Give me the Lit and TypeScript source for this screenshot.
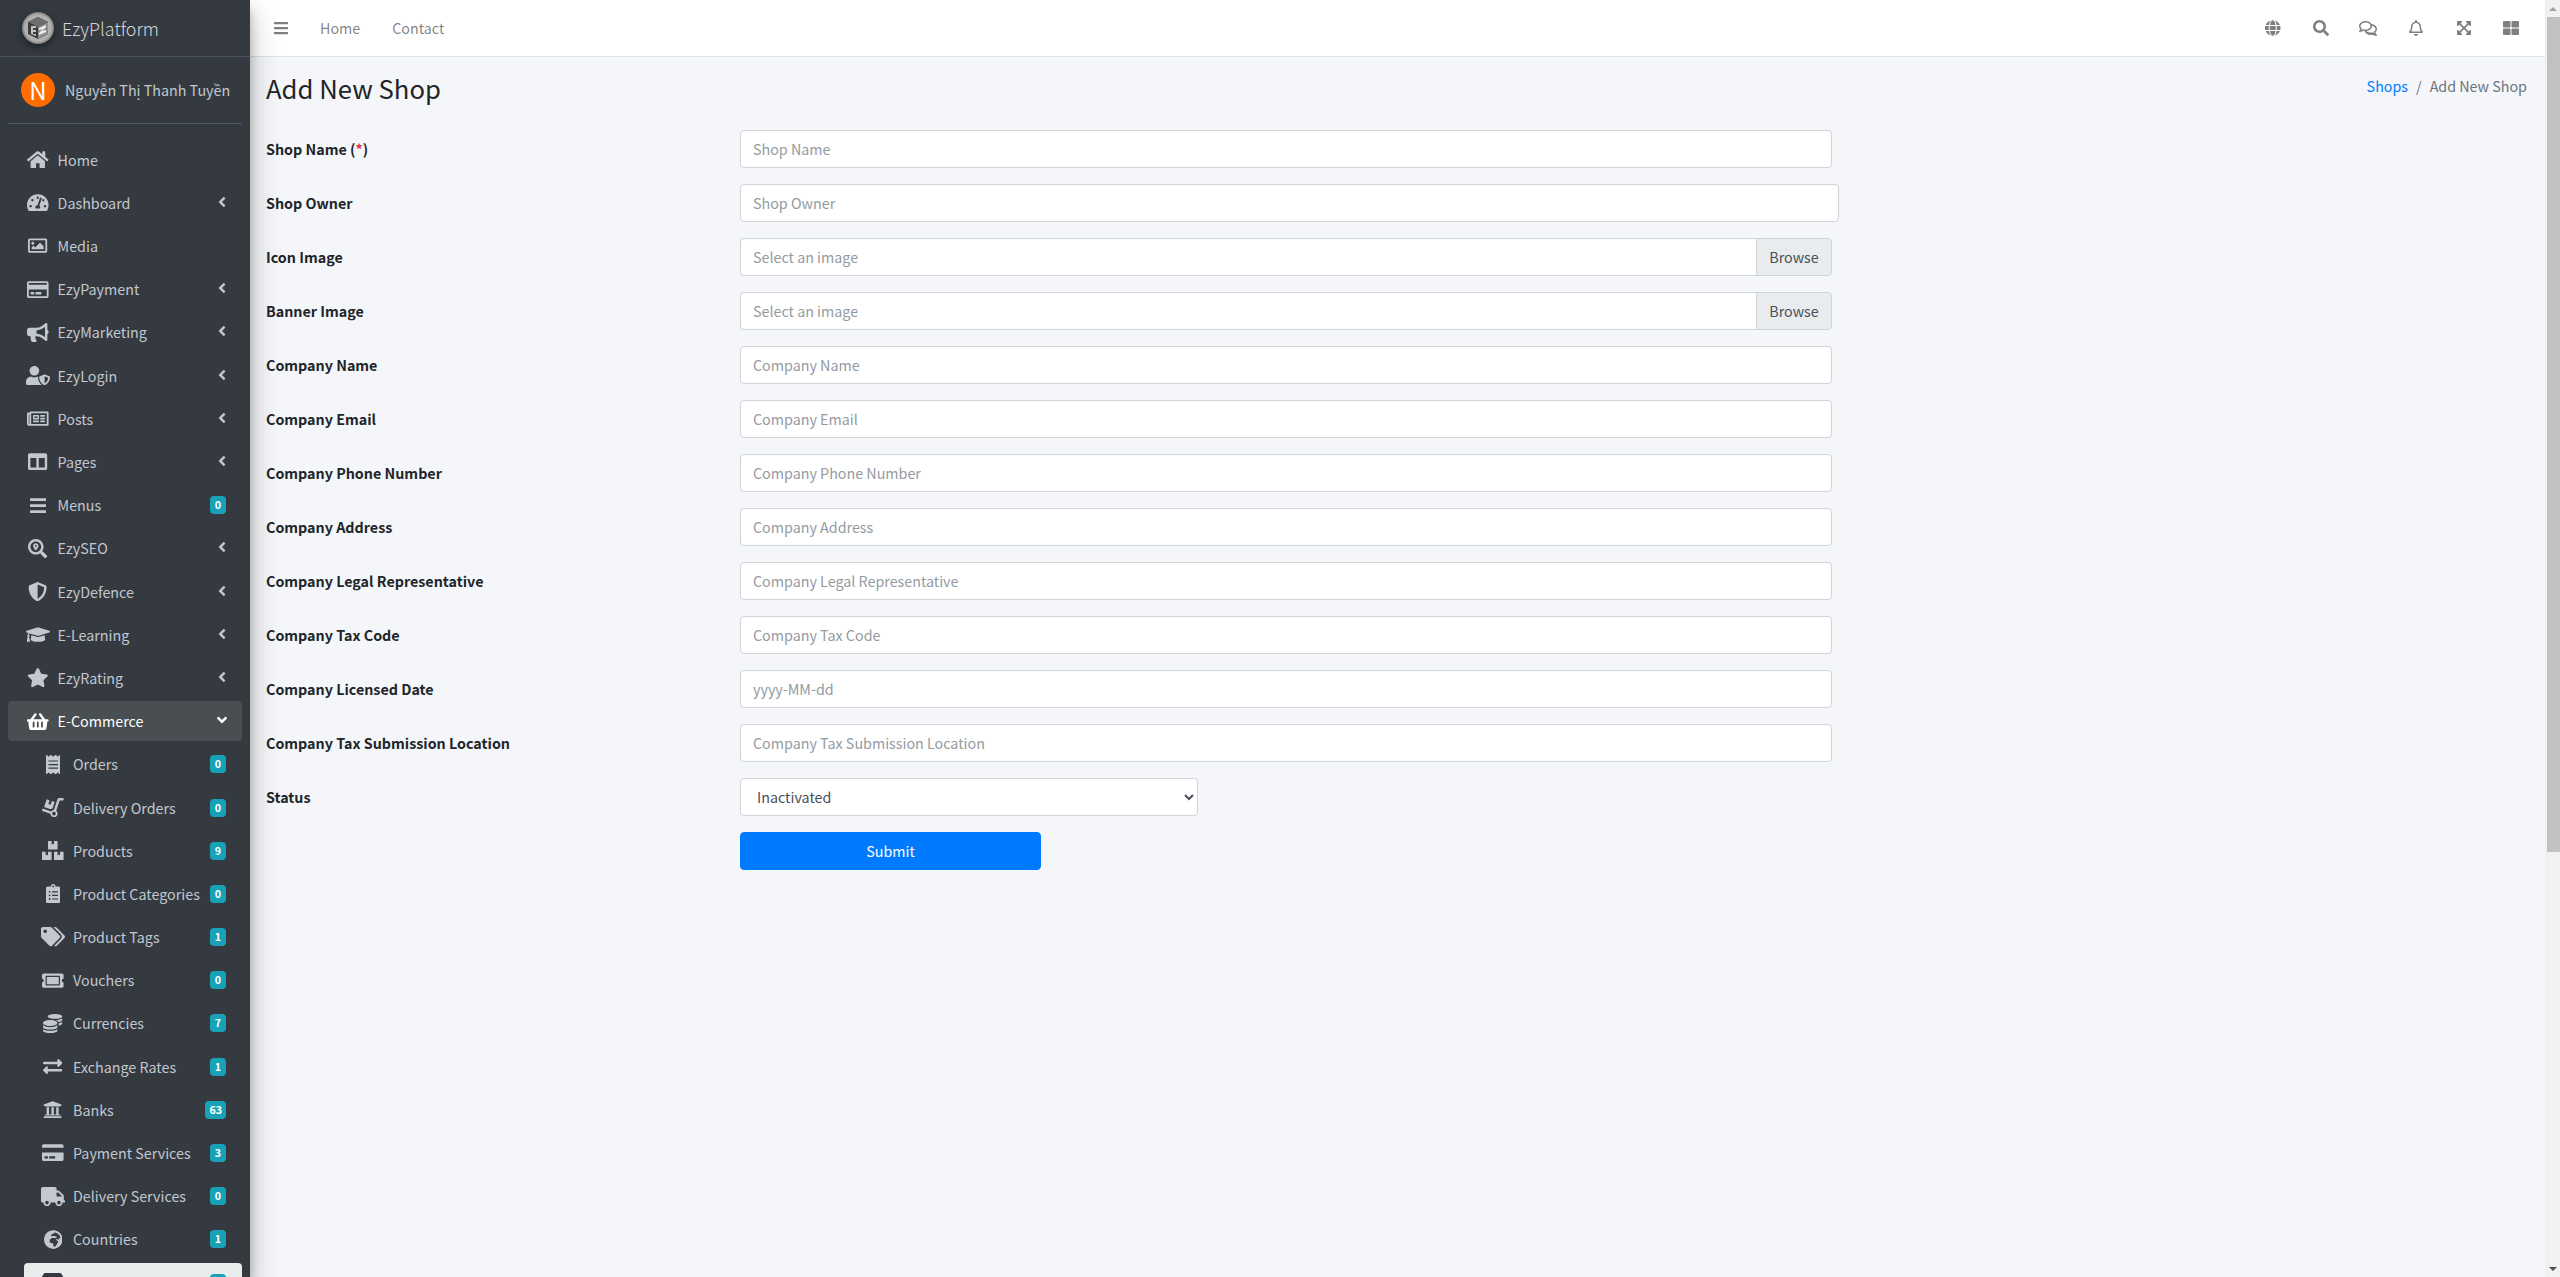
import { LitElement, html, css, svg } from "lit";
import { customElement } from "lit/decorators.js";

type Ic = { w: number; d: string; flip?: boolean };
const I: Record<string, Ic> = {
  bars: { w: 448, d: "M16 132h416c8.837 0 16-7.163 16-16V76c0-8.837-7.163-16-16-16H16C7.163 60 0 67.163 0 76v40c0 8.837 7.163 16 16 16zm0 160h416c8.837 0 16-7.163 16-16v-40c0-8.837-7.163-16-16-16H16c-8.837 0-16 7.163-16 16v40c0 8.837 7.163 16 16 16zm0 160h416c8.837 0 16-7.163 16-16v-40c0-8.837-7.163-16-16-16H16c-8.837 0-16 7.163-16 16v40c0 8.837 7.163 16 16 16z" },
  search: { w: 512, d: "M505 442.7L405.3 343c-4.5-4.5-10.6-7-17-7H372c27.6-35.3 44-79.7 44-128C416 93.1 322.9 0 208 0S0 93.1 0 208s93.1 208 208 208c48.3 0 92.7-16.4 128-44v16.3c0 6.4 2.5 12.5 7 17l99.7 99.7c9.4 9.4 24.6 9.4 33.9 0l28.3-28.3c9.4-9.4 9.4-24.6.1-34zM208 336c-70.7 0-128-57.2-128-128 0-70.7 57.2-128 128-128 70.7 0 128 57.2 128 128 0 70.7-57.2 128-128 128z" },
  star: { w: 576, d: "M259.3 17.8L194 150.2 47.9 171.5c-26.2 3.8-36.7 36.1-17.7 54.6l105.7 103-25 145.5c-4.5 26.3 23.2 46 46.4 33.7L288 439.6l130.7 68.7c23.2 12.2 50.9-7.4 46.4-33.7l-25-145.5 105.7-103c19-18.5 8.5-50.8-17.7-54.6L382 150.2 316.7 17.8c-11.7-23.6-45.6-23.9-57.4 0z" },
  left: { w: 256, d: "M31.7 239l136-136c9.4-9.4 24.6-9.4 33.9 0l22.6 22.6c9.4 9.4 9.4 24.6 0 33.9L127.9 256l96.4 96.4c9.4 9.4 9.4 24.6 0 33.9L201.7 409c-9.4 9.4-24.6 9.4-33.9 0l-136-136c-9.5-9.4-9.5-24.6-.1-34z" },
  down: { w: 320, d: "M143 352.3L7 216.3c-9.4-9.4-9.4-24.6 0-33.9l22.6-22.6c9.4-9.4 24.6-9.4 33.9 0l96.4 96.4 96.4-96.4c9.4-9.4 24.6-9.4 33.9 0l22.6 22.6c9.4 9.4 9.4 24.6 0 33.9l-136 136c-9.2 9.4-24.4 9.4-33.8 0z" },
  home: { w: 576, d: "M280.37 148.26L96 300.11V464a16 16 0 0 0 16 16l112.06-.29a16 16 0 0 0 15.92-16V368a16 16 0 0 1 16-16h64a16 16 0 0 1 16 16v95.64a16 16 0 0 0 16 16.05L464 480a16 16 0 0 0 16-16V300L295.67 148.26a12.19 12.19 0 0 0-15.3 0zM571.6 251.47L488 182.56V44.05a12 12 0 0 0-12-12h-56a12 12 0 0 0-12 12v72.61L318.47 43a48 48 0 0 0-61 0L4.34 251.47a12 12 0 0 0-1.6 16.9l25.5 31A12 12 0 0 0 45.15 301l235.22-193.74a12.19 12.19 0 0 1 15.3 0L530.9 301a12 12 0 0 0 16.9-1.6l25.5-31a12 12 0 0 0-1.7-16.93z" },
  gauge: { w: 576, d: "M288 32C128.94 32 0 160.94 0 320c0 52.8 14.25 102.26 39.06 144.8 5.61 9.62 16.3 15.2 27.44 15.2h443c11.14 0 21.83-5.58 27.44-15.2C561.75 422.26 576 372.8 576 320c0-159.06-128.94-288-288-288zm0 64c14.71 0 26.58 10.13 30.32 23.65-1.11 2.26-2.64 4.23-3.45 6.67l-9.22 27.67c-5.13 3.49-10.97 6.01-17.64 6.01-17.67 0-32-14.33-32-32S270.33 96 288 96zM96 384c-17.67 0-32-14.33-32-32s14.33-32 32-32 32 14.33 32 32-14.33 32-32 32zm48-160c-17.67 0-32-14.33-32-32s14.33-32 32-32 32 14.33 32 32-14.33 32-32 32zm246.77-72.41l-61.33 184C343.13 347.33 352 364.54 352 384c0 11.72-3.38 22.55-8.88 32H232.88c-5.5-9.45-8.88-20.28-8.88-32 0-33.94 26.5-61.43 59.9-63.59l61.34-184.01c4.17-12.56 17.73-19.45 30.36-15.17 12.57 4.19 19.35 17.79 15.17 30.36zm14.66 57.2l15.52-46.55c3.47-1.29 7.13-2.23 11.05-2.23 17.67 0 32 14.33 32 32s-14.33 32-32 32c-11.38-.01-20.89-6.28-26.57-15.22zM480 384c-17.67 0-32-14.33-32-32s14.33-32 32-32 32 14.33 32 32-14.33 32-32 32z" },
  image: { w: 512, d: "M464 64H48C21.49 64 0 85.49 0 112v288c0 26.51 21.49 48 48 48h416c26.51 0 48-21.49 48-48V112c0-26.51-21.49-48-48-48zm-6 336H54a6 6 0 0 1-6-6V118a6 6 0 0 1 6-6h404a6 6 0 0 1 6 6v276a6 6 0 0 1-6 6zM128 152c-22.091 0-40 17.909-40 40s17.909 40 40 40 40-17.909 40-40-17.909-40-40-40zM96 352h320v-80l-87.515-87.515c-4.686-4.686-12.284-4.686-16.971 0L192 304l-39.515-39.515c-4.686-4.686-12.284-4.686-16.971 0L96 304v48z" },
  cardo: { w: 576, d: "M527.9 32H48.1C21.5 32 0 53.5 0 80v352c0 26.5 21.5 48 48.1 48h479.8c26.6 0 48.1-21.5 48.1-48V80c0-26.5-21.5-48-48.1-48zM54.1 80h467.8c3.3 0 6 2.7 6 6v42H48.1V86c0-3.3 2.7-6 6-6zm467.8 352H54.1c-3.3 0-6-2.7-6-6V256h479.8v170c0 3.3-2.7 6-6 6zM192 332v40c0 6.6-5.4 12-12 12h-72c-6.6 0-12-5.4-12-12v-40c0-6.6 5.4-12 12-12h72c6.6 0 12 5.4 12 12zm192 0v40c0 6.6-5.4 12-12 12H236c-6.6 0-12-5.4-12-12v-40c0-6.6 5.4-12 12-12h136c6.6 0 12 5.4 12 12z" },
  card: { w: 576, d: "M0 432c0 26.5 21.5 48 48 48h480c26.5 0 48-21.5 48-48V256H0v176zm192-68c0-6.6 5.4-12 12-12h136c6.6 0 12 5.4 12 12v40c0 6.6-5.4 12-12 12H204c-6.6 0-12-5.4-12-12v-40zm-128 0c0-6.6 5.4-12 12-12h72c6.6 0 12 5.4 12 12v40c0 6.6-5.4 12-12 12H76c-6.6 0-12-5.4-12-12v-40zM576 80v48H0V80c0-26.5 21.5-48 48-48h480c26.5 0 48 21.5 48 48z" },
  bullhorn: { w: 576, d: "M576 240c0-23.63-12.95-44.04-32-55.12V32.01C544 23.26 537.02 0 512 0c-7.12 0-14.19 2.38-19.98 7.02l-85.03 68.03C364.28 109.19 310.66 128 256 128H64c-35.35 0-64 28.65-64 64v96c0 35.35 28.65 64 64 64h33.7c-1.39 10.48-2.18 21.14-2.18 32 0 39.77 9.26 77.35 25.56 110.94 5.19 10.69 16.52 17.06 28.4 17.06h74.28c26.05 0 41.69-29.84 25.9-50.56-16.4-21.52-26.15-48.36-26.15-77.44 0-11.11 1.62-21.79 4.41-32H256c54.66 0 108.28 18.81 150.98 52.95l85.03 68.03a32.023 32.023 0 0 0 19.98 7.02c24.92 0 32-22.78 32-32V295.13C563.05 284.04 576 263.63 576 240zm-96 141.42l-33.05-26.44C392.95 311.78 325.12 288 256 288v-96c69.12 0 136.95-23.78 190.95-66.98L480 98.58v282.84z" },
  usershield: { w: 640, d: "M622.3 271.1l-115.2-45c-4.1-1.6-12.6-3.7-22.2 0l-115.2 45c-10.7 4.2-17.7 14-17.7 24.9 0 111.6 68.7 188.8 132.9 213.9 9.6 3.7 18 1.6 22.2 0C558.4 489.9 640 420.5 640 296c0-10.9-7-20.7-17.7-24.9zM496 462.4V273.3l95.5 37.3c-5.6 87.1-60.9 135.4-95.5 151.8zM224 256c70.7 0 128-57.3 128-128S294.7 0 224 0 96 57.3 96 128s57.3 128 128 128zm96 40c0-2.5.8-4.8 1.1-7.2-2.5-.1-4.9-.8-7.5-.8h-16.7c-22.2 10.2-46.9 16-72.9 16s-50.6-5.8-72.9-16h-16.7C60.2 288 0 348.2 0 422.4V464c0 26.5 21.5 48 48 48h352c6.8 0 13.3-1.5 19.2-4-54-42.9-99.2-116.7-99.2-212z" },
  news: { w: 576, d: "M552 64H112c-20.858 0-38.643 13.377-45.248 32H24c-13.255 0-24 10.745-24 24v272c0 30.928 25.072 56 56 56h496c13.255 0 24-10.745 24-24V88c0-13.255-10.745-24-24-24zM48 392V144h16v248c0 4.411-3.589 8-8 8s-8-3.589-8-8zm480 8H111.422c.374-2.614.578-5.283.578-8V112h416v288zM172 280h136c6.627 0 12-5.373 12-12v-96c0-6.627-5.373-12-12-12H172c-6.627 0-12 5.373-12 12v96c0 6.627 5.373 12 12 12zm28-80h80v40h-80v-40zm-40 140v-24c0-6.627 5.373-12 12-12h136c6.627 0 12 5.373 12 12v24c0 6.627-5.373 12-12 12H172c-6.627 0-12-5.373-12-12zm192 0v-24c0-6.627 5.373-12 12-12h104c6.627 0 12 5.373 12 12v24c0 6.627-5.373 12-12 12H364c-6.627 0-12-5.373-12-12zm0-144v-24c0-6.627 5.373-12 12-12h104c6.627 0 12 5.373 12 12v24c0 6.627-5.373 12-12 12H364c-6.627 0-12-5.373-12-12zm0 72v-24c0-6.627 5.373-12 12-12h104c6.627 0 12 5.373 12 12v24c0 6.627-5.373 12-12 12H364c-6.627 0-12-5.373-12-12z" },
  columns: { w: 512, d: "M464 32H48C21.49 32 0 53.49 0 80v352c0 26.51 21.49 48 48 48h416c26.51 0 48-21.49 48-48V80c0-26.51-21.49-48-48-48zM224 416H64V160h160v256zm224 0H288V160h160v256z" },
  searchloc: { w: 512, d: "M505.04 442.66l-99.71-99.69c-4.5-4.5-10.6-7-17-7h-16.3c27.6-35.3 44-79.69 44-127.99C416.03 93.09 322.92 0 208.02 0S0 93.09 0 207.98s93.11 207.98 208.02 207.98c48.3 0 92.71-16.4 128.01-44v16.3c0 6.4 2.5 12.5 7 17l99.71 99.69c9.4 9.4 24.6 9.4 33.9 0l28.3-28.3c9.4-9.4 9.4-24.59.1-33.99zm-297.02-90.7c-79.54 0-144-64.34-144-143.98 0-79.53 64.35-143.98 144-143.98 79.54 0 144 64.34 144 143.98 0 79.53-64.35 143.98-144 143.98zm.02-239.96c-40.78 0-73.84 33.05-73.84 73.83 0 32.96 48.26 93.05 66.75 114.86a9.24 9.24 0 0 0 14.18 0c18.49-21.81 66.75-81.9 66.75-114.86 0-40.78-33.06-73.83-73.84-73.83zm0 96c-13.26 0-24-10.75-24-24 0-13.26 10.75-24 24-24s24 10.74 24 24c0 13.25-10.75 24-24 24z" },
  shield: { w: 512, d: "M466.5 83.7l-192-80a48.15 48.15 0 0 0-36.9 0l-192 80C27.7 91.1 16 108.6 16 128c0 198.5 114.5 335.7 221.5 380.3 11.8 4.9 25.1 4.9 36.9 0C360.1 472.6 496 349.3 496 128c0-19.4-11.7-36.9-29.5-44.3zM256.1 446.3l-.1-381 175.9 73.3c-3.3 151.4-82.1 261.1-175.8 307.7z" },
  grad: { w: 640, d: "M622.34 153.2L343.4 67.5c-15.2-4.67-31.6-4.67-46.79 0L17.66 153.2c-23.54 7.23-23.54 38.36 0 45.59l48.63 14.94c-10.67 13.19-17.23 29.28-17.88 46.9C38.78 266.15 32 276.11 32 288c0 10.78 5.68 19.85 13.86 25.65L20.33 428.53C18.11 438.52 25.71 448 35.94 448h56.11c10.24 0 17.84-9.48 15.62-19.47L82.14 313.65C90.32 307.85 96 298.78 96 288c0-11.57-6.47-21.25-15.66-26.87.76-15.02 8.44-28.3 20.69-36.72L296.6 284.5c9.06 2.78 26.44 6.25 46.79 0l278.95-85.7c23.55-7.24 23.55-38.36 0-45.6zM352.79 315.09c-28.53 8.76-52.84 3.92-65.59 0l-145.02-44.55L128 384c0 35.35 85.96 64 192 64s192-28.65 192-64l-14.18-113.47-145.03 44.56z" },
  basket: { w: 576, d: "M576 216v16c0 13.255-10.745 24-24 24h-8l-26.113 182.788C514.509 462.435 494.257 480 470.37 480H105.63c-23.887 0-44.139-17.565-47.518-41.212L32 256h-8c-13.255 0-24-10.745-24-24v-16c0-13.255 10.745-24 24-24h67.341l106.78-146.821c10.395-14.292 30.407-17.453 44.701-7.058 14.293 10.395 17.453 30.408 7.058 44.701L170.477 192h235.046L326.12 82.821c-10.395-14.292-7.234-34.306 7.059-44.701 14.291-10.395 34.306-7.235 44.701 7.058L484.659 192H552c13.255 0 24 10.745 24 24zM312 392V280c0-13.255-10.745-24-24-24s-24 10.745-24 24v112c0 13.255 10.745 24 24 24s24-10.745 24-24zm112 0V280c0-13.255-10.745-24-24-24s-24 10.745-24 24v112c0 13.255 10.745 24 24 24s24-10.745 24-24zm-224 0V280c0-13.255-10.745-24-24-24s-24 10.745-24 24v112c0 13.255 10.745 24 24 24s24-10.745 24-24z" },
  receipt: { w: 384, d: "M358.4 3.2L320 48 265.6 3.2a15.9 15.9 0 0 0-19.2 0L192 48 137.6 3.2a15.9 15.9 0 0 0-19.2 0L64 48 25.6 3.2C15-4.7 0 2.8 0 16v480c0 13.2 15 20.7 25.6 12.8L64 464l54.4 44.8a15.9 15.9 0 0 0 19.2 0L192 464l54.4 44.8a15.9 15.9 0 0 0 19.2 0L320 464l38.4 44.8c10.5 7.9 25.6.4 25.6-12.8V16c0-13.2-15-20.7-25.6-12.8zM320 360c0 4.4-3.6 8-8 8H72c-4.4 0-8-3.6-8-8v-16c0-4.4 3.6-8 8-8h240c4.4 0 8 3.6 8 8v16zm0-96c0 4.4-3.6 8-8 8H72c-4.4 0-8-3.6-8-8v-16c0-4.4 3.6-8 8-8h240c4.4 0 8 3.6 8 8v16zm0-96c0 4.4-3.6 8-8 8H72c-4.4 0-8-3.6-8-8v-16c0-4.4 3.6-8 8-8h240c4.4 0 8 3.6 8 8v16z" },
  dolly: { w: 576, flip: true, d: "M294.2 277.7c18 5 34.7 13.4 49.5 24.7l161.5-53.8c8.4-2.8 12.9-11.9 10.1-20.2L454.9 47.2c-2.8-8.4-11.9-12.9-20.2-10.1l-61.1 20.4 33.1 99.4L346 177l-33.1-99.4-61.6 20.5c-8.4 2.8-12.9 11.9-10.1 20.2l53 159.4zm281 48.7L565 296c-2.8-8.4-11.9-12.9-20.2-10.1l-213.5 71.2c-17.2-22-43.6-36.4-73.5-37L158.4 21.9C154 8.8 141.8 0 128 0H16C7.2 0 0 7.2 0 16v32c0 8.8 7.2 16 16 16h88.9l92.2 276.7c-26.1 20.4-41.7 53.6-36 90.5 6.1 39.4 37.9 72.3 77.3 79.2 60.2 10.7 112.3-34.8 113.4-92.6l213.3-71.2c8.3-2.8 12.9-11.8 10.1-20.2zM256 464c-26.5 0-48-21.5-48-48s21.5-48 48-48 48 21.5 48 48-21.5 48-48 48z" },
  boxes: { w: 576, d: "M560 288h-80v96l-32-21.3-32 21.3v-96h-80c-8.8 0-16 7.2-16 16v192c0 8.8 7.2 16 16 16h224c8.8 0 16-7.2 16-16V304c0-8.8-7.2-16-16-16zm-384-64h224c8.8 0 16-7.2 16-16V16c0-8.8-7.2-16-16-16h-80v96l-32-21.3L256 96V0h-80c-8.8 0-16 7.2-16 16v192c0 8.8 7.2 16 16 16zm64 64h-80v96l-32-21.3L96 384v-96H16c-8.8 0-16 7.2-16 16v192c0 8.8 7.2 16 16 16h224c8.8 0 16-7.2 16-16V304c0-8.8-7.2-16-16-16z" },
  clip: { w: 384, d: "M336 64h-80c0-35.3-28.7-64-64-64s-64 28.7-64 64H48C21.5 64 0 85.5 0 112v352c0 26.5 21.5 48 48 48h288c26.5 0 48-21.5 48-48V112c0-26.5-21.5-48-48-48zM96 424c-13.3 0-24-10.7-24-24s10.7-24 24-24 24 10.7 24 24-10.7 24-24 24zm0-96c-13.3 0-24-10.7-24-24s10.7-24 24-24 24 10.7 24 24-10.7 24-24 24zm0-96c-13.3 0-24-10.7-24-24s10.7-24 24-24 24 10.7 24 24-10.7 24-24 24zm96-192c13.3 0 24 10.7 24 24s-10.7 24-24 24-24-10.7-24-24 10.7-24 24-24zm128 368c0 4.4-3.6 8-8 8H168c-4.4 0-8-3.6-8-8v-16c0-4.4 3.6-8 8-8h144c4.4 0 8 3.6 8 8v16zm0-96c0 4.4-3.6 8-8 8H168c-4.4 0-8-3.6-8-8v-16c0-4.4 3.6-8 8-8h144c4.4 0 8 3.6 8 8v16zm0-96c0 4.4-3.6 8-8 8H168c-4.4 0-8-3.6-8-8v-16c0-4.4 3.6-8 8-8h144c4.4 0 8 3.6 8 8v16z" },
  tags: { w: 640, d: "M497.941 225.941L286.059 14.059A48 48 0 0 0 252.118 0H48C21.49 0 0 21.49 0 48v204.118a48 48 0 0 0 14.059 33.941l211.882 211.882c18.744 18.745 49.136 18.746 67.882 0l204.118-204.118c18.745-18.745 18.745-49.137 0-67.882zM112 160c-26.51 0-48-21.49-48-48s21.49-48 48-48 48 21.49 48 48-21.49 48-48 48zm513.941 133.823L421.823 497.941c-18.745 18.745-49.137 18.745-67.882 0l-.36-.36L527.64 323.522c16.999-16.999 26.36-39.6 26.36-63.64s-9.362-46.641-26.36-63.64L331.397 0h48.721a48 48 0 0 1 33.941 14.059l211.882 211.882c18.745 18.745 18.745 49.137 0 67.882z" },
  ticket: { w: 576, d: "M128 160h320v192H128V160zm400 96c0 26.51 21.49 48 48 48v96c0 26.51-21.49 48-48 48H48c-26.51 0-48-21.49-48-48v-96c26.51 0 48-21.49 48-48s-21.49-48-48-48v-96c0-26.51 21.49-48 48-48h480c26.51 0 48 21.49 48 48v96c-26.51 0-48 21.49-48 48zm-48-104c0-13.255-10.745-24-24-24H120c-13.255 0-24 10.745-24 24v208c0 13.255 10.745 24 24 24h336c13.255 0 24-10.745 24-24V152z" },
  coins: { w: 512, d: "M0 405.3V448c0 35.3 86 64 192 64s192-28.7 192-64v-42.7C342.7 434.4 267.2 448 192 448S41.3 434.4 0 405.3zM320 128c106 0 192-28.7 192-64S426 0 320 0 128 28.7 128 64s86 64 192 64zM0 300.4V352c0 35.3 86 64 192 64s192-28.7 192-64v-51.6c-41.3 34-116.9 51.6-192 51.6S41.3 334.4 0 300.4zm416 11c57.3-11.1 96-31.7 96-55.4v-42.7c-23.2 16.4-57.3 27.6-96 34.5v63.6zM192 160C86 160 0 195.8 0 240s86 80 192 80 192-35.8 192-80-86-80-192-80zm219.3 56.3c60-10.8 100.7-32 100.7-56.3v-42.7c-35.5 25.1-96.5 38.6-160.7 41.8 29.5 14.3 51.2 33.5 60 57.2z" },
  exchange: { w: 512, d: "M0 168v-16c0-13.255 10.745-24 24-24h360V80c0-21.367 25.899-32.042 40.971-16.971l80 80c9.372 9.373 9.372 24.569 0 33.941l-80 80C409.956 271.982 384 261.456 384 240v-48H24c-13.255 0-24-10.745-24-24zm488 152H128v-48c0-21.314-25.862-32.08-40.971-16.971l-80 80c-9.372 9.373-9.372 24.569 0 33.941l80 80C102.057 463.997 128 453.437 128 432v-48h360c13.255 0 24-10.745 24-24v-16c0-13.255-10.745-24-24-24z" },
  bank: { w: 512, d: "M496 128v16a8 8 0 0 1-8 8h-24v12c0 6.627-5.373 12-12 12H60c-6.627 0-12-5.373-12-12v-12H24a8 8 0 0 1-8-8v-16a8 8 0 0 1 4.941-7.392l232-88a7.996 7.996 0 0 1 6.118 0l232 88A8 8 0 0 1 496 128zm-24 304H40c-13.255 0-24 10.745-24 24v16a8 8 0 0 0 8 8h464a8 8 0 0 0 8-8v-16c0-13.255-10.745-24-24-24zM96 192v192H60c-6.627 0-12 5.373-12 12v20h416v-20c0-6.627-5.373-12-12-12h-36V192h-64v192h-64V192h-64v192h-64V192H96z" },
  truck: { w: 640, d: "M624 352h-16V243.9c0-12.7-5.1-24.9-14.1-33.9L494 110.1c-9-9-21.2-14.1-33.9-14.1H416V48c0-26.5-21.5-48-48-48H48C21.5 0 0 21.5 0 48v320c0 26.5 21.5 48 48 48h16c0 53 43 96 96 96s96-43 96-96h128c0 53 43 96 96 96s96-43 96-96h48c8.8 0 16-7.2 16-16v-32c0-8.8-7.2-16-16-16zM160 464c-26.5 0-48-21.5-48-48s21.5-48 48-48 48 21.5 48 48-21.5 48-48 48zm320 0c-26.5 0-48-21.5-48-48s21.5-48 48-48 48 21.5 48 48-21.5 48-48 48zm80-208H416V144h44.1l99.9 99.9V256z" },
  africa: { w: 496, d: "M248 8C111.03 8 0 119.03 0 256s111.03 248 248 248 248-111.03 248-248S384.97 8 248 8zm160 215.5v6.93c0 5.87-3.32 11.24-8.57 13.86l-15.39 7.7a15.485 15.485 0 0 1-15.53-.97l-18.21-12.14a15.52 15.52 0 0 0-13.5-1.81l-2.65.88c-9.7 3.23-13.66 14.79-7.99 23.3l13.24 19.86c2.87 4.31 7.71 6.9 12.89 6.9h8.21c8.56 0 15.5 6.94 15.5 15.5v11.34c0 3.35-1.09 6.62-3.1 9.3l-18.74 24.98c-1.42 1.9-2.39 4.1-2.83 6.43l-4.3 22.83c-.62 3.29-2.29 6.29-4.76 8.56a159.608 159.608 0 0 0-25 29.16l-13.03 19.55a27.756 27.756 0 0 1-23.09 12.36c-10.51 0-20.12-5.94-24.82-15.34a78.902 78.902 0 0 1-8.33-35.29V367.5c0-8.56-6.94-15.5-15.5-15.5h-25.88c-14.49 0-28.38-5.76-38.63-16a54.659 54.659 0 0 1-16-38.63v-14.06c0-17.19 8.1-33.38 21.85-43.7l27.58-20.69a54.663 54.663 0 0 1 32.78-10.93h.89c8.48 0 16.85 1.97 24.43 5.77l14.72 7.36c3.68 1.84 7.93 2.14 11.83.84l47.31-15.77c6.33-2.11 10.6-8.03 10.6-14.7 0-8.56-6.94-15.5-15.5-15.5h-10.09c-4.11 0-8.05-1.63-10.96-4.54l-6.92-6.92a15.493 15.493 0 0 0-10.96-4.54H199.5c-8.56 0-15.5-6.94-15.5-15.5v-4.4c0-7.11 4.84-13.31 11.74-15.04l14.45-3.61c3.74-.94 7-3.23 9.14-6.44l8.08-12.11c2.87-4.31 7.71-6.9 12.89-6.9h24.21c8.56 0 15.5-6.94 15.5-15.5v-21.7C359.23 71.63 422.86 131.02 441.93 208H423.5c-8.56 0-15.5 6.94-15.5 15.5z" },
  comments: { w: 576, d: "M532 386.2c27.5-27.1 44-61.1 44-98.2 0-80-76.5-146.1-176.2-157.9C368.3 72.5 294.3 32 208 32 93.1 32 0 103.6 0 192c0 37 16.5 71 44 98.2-15.3 30.7-37.3 54.5-37.7 54.9-6.3 6.7-8.1 16.5-4.4 25 3.6 8.5 12 14 21.2 14 53.5 0 96.7-20.2 125.2-38.8 9.2 2.1 18.7 3.7 28.4 4.9C208.1 439.6 281.8 480 368 480c20.8 0 40.8-2.4 59.8-6.8C456.3 491.8 499.4 512 553 512c9.2 0 17.5-5.5 21.2-14 3.6-8.5 1.9-18.3-4.4-25-.4-.3-22.5-24.1-37.8-54.8zm-392.8-92.3L122.1 305c-14.1 9.1-28.5 16.3-43.1 21.4 2.7-4.7 5.4-9.7 8-14.8l15.5-31.1L77.7 256C64.2 242.6 48 220.7 48 192c0-60.7 73.3-112 160-112s160 51.3 160 112-73.3 112-160 112c-16.5 0-33-1.9-49-5.6l-19.8-4.5zM498.3 352l-24.7 24.4 15.5 31.1c2.6 5.1 5.3 10.1 8 14.8-14.6-5.1-29-12.3-43.1-21.4l-17.1-11.1-19.9 4.6c-16 3.7-32.5 5.6-49 5.6-54 0-102.2-20.1-131.3-49.7C338 339.5 416 272.9 416 192c0-3.4-.4-6.7-.7-10C479.7 196.5 528 238.8 528 288c0 28.7-16.2 50.6-29.7 64z" },
  bell: { w: 448, d: "M439.39 362.29c-19.32-20.76-55.47-51.99-55.47-154.29 0-77.7-54.48-139.9-127.94-155.16V32c0-17.67-14.32-32-31.98-32s-31.98 14.33-31.98 32v20.84C118.56 68.1 64.08 130.3 64.08 208c0 102.3-36.15 133.53-55.47 154.29-6 6.45-8.66 14.16-8.61 21.71.11 16.4 12.98 32 32.1 32h383.8c19.12 0 32-15.6 32.1-32 .05-7.55-2.61-15.27-8.61-21.71zM67.53 368c21.22-27.97 44.42-74.33 44.53-159.42 0-.2-.06-.38-.06-.58 0-61.86 50.14-112 112-112s112 50.14 112 112c0 .2-.06.38-.06.58.11 85.1 23.31 131.46 44.53 159.42H67.53zM224 512c35.32 0 63.97-28.65 63.97-64H160.03c0 35.35 28.65 64 63.97 64z" },
  expand: { w: 448, d: "M448 344v112a23.94 23.94 0 0 1-24 24H312c-21.39 0-32.09-25.9-17-41l36.2-36.2L224 295.6 116.77 402.9 153 439c15.09 15.1 4.39 41-17 41H24a23.94 23.94 0 0 1-24-24V344c0-21.4 25.89-32.1 41-17l36.19 36.2L184.46 256 77.18 148.7 41 185c-15.1 15.1-41 4.4-41-17V56a23.94 23.94 0 0 1 24-24h112c21.39 0 32.09 25.9 17 41l-36.2 36.2L224 216.4l107.23-107.3L295 73c-15.09-15.1-4.39-41 17-41h112a23.94 23.94 0 0 1 24 24v112c0 21.4-25.89 32.1-41 17l-36.19-36.2L263.54 256l107.28 107.3L407 327.1c15.1-15.2 41-4.5 41 16.9z" },
  th: { w: 512, d: "M296 32h192c13.255 0 24 10.745 24 24v160c0 13.255-10.745 24-24 24H296c-13.255 0-24-10.745-24-24V56c0-13.255 10.745-24 24-24zm-80 0H24C10.745 32 0 42.745 0 56v160c0 13.255 10.745 24 24 24h192c13.255 0 24-10.745 24-24V56c0-13.255-10.745-24-24-24zM0 296v160c0 13.255 10.745 24 24 24h192c13.255 0 24-10.745 24-24V296c0-13.255-10.745-24-24-24H24c-13.255 0-24 10.745-24 24zm296 184h192c13.255 0 24-10.745 24-24V296c0-13.255-10.745-24-24-24H296c-13.255 0-24 10.745-24 24v160c0 13.255 10.745 24 24 24z" },
  globe: { w: 496, d: "M336.5 160C322 70.7 287.8 8 248 8s-74 62.7-88.5 152h177zM152 256c0 22.2 1.2 43.5 3.3 64h185.3c2.1-20.5 3.3-41.8 3.3-64s-1.2-43.5-3.3-64H155.3c-2.1 20.5-3.3 41.8-3.3 64zm324.7-96c-28.6-67.9-86.5-120.4-158-141.6 24.4 33.8 41.2 84.7 50 141.6h108zM177.2 18.4C105.8 39.6 47.8 92.1 19.3 160h108c8.7-56.9 25.5-107.8 49.9-141.6zM487.4 192H372.7c2.1 21 3.3 42.5 3.3 64s-1.2 43-3.3 64h114.6c5.5-20.5 8.6-41.8 8.6-64s-3.1-43.5-8.5-64zM120 256c0-21.5 1.2-43 3.3-64H8.6C3.2 212.5 0 233.8 0 256s3.2 43.5 8.6 64h114.6c-2-21-3.2-42.5-3.2-64zm39.5 96c14.5 89.3 48.7 152 88.5 152s74-62.7 88.5-152h-177zm159.3 141.6c71.4-21.2 129.4-73.7 158-141.6h-108c-8.8 56.9-25.6 107.8-50 141.6zM19.3 352c28.6 67.9 86.5 120.4 158 141.6-24.4-33.8-41.2-84.7-50-141.6h-108z" },
  store: { w: 616, d: "M602 118.6L537.1 15C531.3 5.7 521 0 510 0H106C95 0 84.7 5.7 78.9 15L14 118.6C-16 166 0 256 80 256h456c80 0 96-90 66-137.4zM64 288v208c0 9 7 16 16 16h456c9 0 16-7 16-16V288H64z" },
};

function icon(name: string, cls = "") {
  const i = I[name];
  return html`<svg class="fa ${cls}" viewBox="0 0 ${i.w} 512" style="aspect-ratio:${i.w}/512" fill="currentColor">${i.flip ? svg`<g transform="matrix(-1 0 0 1 ${i.w} 0)"><path d=${i.d}></path></g>` : svg`<path d=${i.d}></path>`}</svg>`;
}

type Item = { label: string; icon: string; arrow?: boolean; badge?: string };
const topItems: Item[] = [
  { label: "Home", icon: "home" },
  { label: "Dashboard", icon: "gauge", arrow: true },
  { label: "Media", icon: "image" },
  { label: "EzyPayment", icon: "cardo", arrow: true },
  { label: "EzyMarketing", icon: "bullhorn", arrow: true },
  { label: "EzyLogin", icon: "usershield", arrow: true },
  { label: "Posts", icon: "news", arrow: true },
  { label: "Pages", icon: "columns", arrow: true },
  { label: "Menus", icon: "bars", badge: "0" },
  { label: "EzySEO", icon: "searchloc", arrow: true },
  { label: "EzyDefence", icon: "shield", arrow: true },
  { label: "E-Learning", icon: "grad", arrow: true },
  { label: "EzyRating", icon: "star", arrow: true },
];
const subItems: Item[] = [
  { label: "Orders", icon: "receipt", badge: "0" },
  { label: "Delivery Orders", icon: "dolly", badge: "0" },
  { label: "Products", icon: "boxes", badge: "9" },
  { label: "Product Categories", icon: "clip", badge: "0" },
  { label: "Product Tags", icon: "tags", badge: "1" },
  { label: "Vouchers", icon: "ticket", badge: "0" },
  { label: "Currencies", icon: "coins", badge: "7" },
  { label: "Exchange Rates", icon: "exchange", badge: "1" },
  { label: "Banks", icon: "bank", badge: "63" },
  { label: "Payment Services", icon: "card", badge: "3" },
  { label: "Delivery Services", icon: "truck", badge: "0" },
  { label: "Countries", icon: "africa", badge: "1" },
];
const fields: { label: string; ph: string; kind?: string }[] = [
  { label: "Shop Name", ph: "Shop Name", kind: "req" },
  { label: "Shop Owner", ph: "Shop Owner", kind: "wide" },
  { label: "Icon Image", ph: "Select an image", kind: "file" },
  { label: "Banner Image", ph: "Select an image", kind: "file" },
  { label: "Company Name", ph: "Company Name" },
  { label: "Company Email", ph: "Company Email" },
  { label: "Company Phone Number", ph: "Company Phone Number" },
  { label: "Company Address", ph: "Company Address" },
  { label: "Company Legal Representative", ph: "Company Legal Representative" },
  { label: "Company Tax Code", ph: "Company Tax Code" },
  { label: "Company Licensed Date", ph: "yyyy-MM-dd" },
  { label: "Company Tax Submission Location", ph: "Company Tax Submission Location" },
];

@customElement("app-root")
export class AppRoot extends LitElement {
  static styles = css`
    :host {
      display: flex;
      width: 100%;
      height: 100vh;
      overflow: hidden;
      font-family: "Noto Sans CJK JP", "Noto Sans", sans-serif;
      font-size: 14.3px;
      line-height: 24px;
      color: #212529;
      background: #f4f6f9;
    }
    * { box-sizing: border-box; }
    .fa { display: block; flex: none; height: 100%; }
    .sidebar {
      width: 250px;
      flex: none;
      height: 100%;
      overflow: hidden;
      background: #343a40;
      box-shadow: 0 14px 28px rgba(0,0,0,.25), 0 10px 10px rgba(0,0,0,.22);
      position: relative;
      z-index: 2;
      color: #c2c7d0;
    }
    .brand {
      height: 57px;
      border-bottom: 1px solid #4b545c;
      display: flex;
      align-items: center;
      padding-left: 21px;
      gap: 7px;
      font-size: 17.9px;
      font-weight: 300;
      color: rgba(255,255,255,.8);
    }
    .logo { width: 34px; height: 34px; flex: none; filter: drop-shadow(0 3px 4px rgba(0,0,0,.45)); }
    .user {
      height: 67px;
      margin: 0 8px;
      border-bottom: 1px solid #4f5962;
      display: flex;
      align-items: center;
      padding-left: 13px;
      gap: 10px;
      white-space: nowrap;
    }
    .avatar {
      width: 34px;
      height: 34px;
      border-radius: 50%;
      flex: none;
      background: #ff6d00;
      color: #fff;
      display: flex;
      align-items: center;
      justify-content: center;
      font-size: 24px;
    }
    .nav { padding: 15.7px 8px 0; }
    .link {
      height: 40px;
      margin-bottom: 3.2px;
      display: flex;
      align-items: center;
      border-radius: 4px;
      padding: 0 16px 0 17px;
      white-space: nowrap;
    }
    .link.open { background: #494e53; color: #fff; }
    .ic {
      width: 26px;
      height: 19.2px;
      margin-right: 6.6px;
      flex: none;
      display: flex;
      justify-content: center;
    }
    .sub { padding-left: 16px; }
    .sub .link { padding-left: 16px; }
    .sub .ic { margin-right: 7px; }
    .link.current { background: #e9ecec; color: #343a40; }
    .label { flex: 1; min-width: 0; }
    .arrow { height: 16px; width: 8px; flex: none; margin-top: -2px; display: flex; justify-content: center; }
    .arrow.dn { width: 10px; margin-right: -1px; }
    .badge {
      flex: none;
      min-width: 16px;
      height: 18px;
      padding: 0 4px;
      border-radius: 4px;
      background: #17a2b8;
      color: #fff;
      font-size: 10.7px;
      line-height: 18px;
      font-weight: 700;
      text-align: center;
    }
    .main { flex: 1; min-width: 0; display: flex; flex-direction: column; }
    .topbar {
      height: 57px;
      flex: none;
      background: #fff;
      border-bottom: 1px solid #dee2e6;
      display: flex;
      align-items: center;
      padding-left: 24px;
      color: rgba(0,0,0,.5);
    }
    .burger { height: 16px; width: 14px; margin-right: 32px; display: flex; }
    .topbar a { margin-right: 32px; color: rgba(0,0,0,.5); }
    .tools { margin-left: auto; display: flex; align-items: center; padding-right: 10px; }
    .tool { width: 47.6px; height: 16px; display: flex; justify-content: center; }
    .content { flex: 1; padding: 0 16px; min-height: 0; }
    .head {
      height: 73px;
      padding-top: 12px;
      display: flex;
      justify-content: space-between;
    }
    h1 { margin: 0; font-size: 25.7px; line-height: 38px; font-weight: 400; }
    .crumbs { display: flex; line-height: 34px; color: #6c757d; padding-right: 2px; }
    .crumbs a { color: #007bff; }
    .crumbs i { font-style: normal; padding: 0 8px; }
    .row { display: flex; height: 38px; margin-bottom: 16px; align-items: center; }
    .row label { width: 474px; flex: none; font-weight: 700; }
    .req { color: #dc3545; }
    .ctl {
      width: 1092px;
      height: 38px;
      padding: 5px 12px 7px;
      font: inherit;
      color: #495057;
      background: #fff;
      border: 1px solid #ced4da;
      border-radius: 4px;
      outline: none;
      display: block;
    }
    .ctl::placeholder { color: #939ba2; opacity: 1; }
    .ctl.wide { width: 1099px; }
    .group { display: flex; width: 1092px; }
    .group .ctl { flex: 1; width: auto; min-width: 0; border-radius: 4px 0 0 4px; border-right: 0; }
    .browse {
      width: 76px;
      height: 38px;
      flex: none;
      background: #e9ecef;
      border: 1px solid #ced4da;
      border-radius: 0 4px 4px 0;
      color: #495057;
      text-align: center;
      line-height: 36px;
    }
    select.ctl { width: 458px; }
    .submit {
      display: block;
      margin-left: 474px;
      width: 301px;
      height: 38px;
      border: 1px solid #007bff;
      background: #007bff;
      color: #fff;
      border-radius: 4px;
      font: inherit;
      text-align: center;
    }
    .scroll {
      width: 15px;
      flex: none;
      background: #f1f1f1;
      border-left: 1px solid #eeeeee;
      display: flex;
      flex-direction: column;
      align-items: center;
      position: relative;
      z-index: 3;
    }
    .sb-btn { height: 17px; flex: none; width: 100%; display: flex; align-items: center; justify-content: center; }
    .up { width: 0; height: 0; border: 4px solid transparent; border-top: 0; border-bottom: 4px solid #a3a3a3; }
    .dn2 { width: 0; height: 0; border: 4px solid transparent; border-bottom: 0; border-top: 4px solid #505050; }
    .thumb { width: 13px; height: 835px; background: #c1c1c1; flex: none; }
    .gap { flex: 1; }
  `;

  private link(it: Item, extra = "") {
    return html`<div class="link ${extra}">
      <span class="ic">${icon(it.icon)}</span>
      <span class="label">${it.label}</span>
      ${it.arrow ? html`<span class="arrow">${icon("left")}</span>` : ""}
      ${it.badge !== undefined ? html`<span class="badge">${it.badge}</span>` : ""}
    </div>`;
  }

  render() {
    return html`
      <aside class="sidebar">
        <div class="brand">
          <svg class="logo" viewBox="0 0 34 34">
            <defs>
              <radialGradient id="lg" cx="50%" cy="50%" r="50%">
                <stop offset="0" stop-color="#b8b8b8"></stop>
                <stop offset="0.82" stop-color="#b0b0b0"></stop>
                <stop offset="1" stop-color="#7d7d7d"></stop>
              </radialGradient>
            </defs>
            <circle cx="17" cy="17" r="16" fill="url(#lg)"></circle>
            <path d="M17 6l10 5v12l-10 5-10-5V11z" fill="#3d3d3d"></path>
            <path d="M17 6l10 5-10 5-10-5z" fill="#6d6d6d"></path>
            <path d="M17 16l10-5v12l-10 5z" fill="#8c8c8c"></path>
            <path d="M10 15h5v2h-3v2h3v2h-3v2h3v2l-5-2z" fill="#c4c4c4"></path>
            <path d="M18 17l7-3v2l-4 4 4-1v2l-7 3v-2l4-4-4 1z" fill="#f0f0f0"></path>
          </svg>
          <span>EzyPlatform</span>
        </div>
        <div class="user">
          <div class="avatar">N</div>
          <span>Nguyễn Thị Thanh Tuyền</span>
        </div>
        <nav class="nav">
          ${topItems.map((it) => this.link(it))}
          <div class="link open">
            <span class="ic">${icon("basket")}</span>
            <span class="label">E-Commerce</span>
            <span class="arrow dn">${icon("down")}</span>
          </div>
          <div class="sub">
            ${subItems.map((it) => this.link(it))}
            ${this.link({ label: "", icon: "store", badge: "" }, "current")}
          </div>
        </nav>
      </aside>
      <div class="main">
        <header class="topbar">
          <span class="burger">${icon("bars")}</span>
          <a>Home</a>
          <a>Contact</a>
          <div class="tools">
            ${["globe", "search", "comments", "bell", "expand", "th"].map(
              (n) => html`<span class="tool">${icon(n)}</span>`
            )}
          </div>
        </header>
        <section class="content">
          <div class="head">
            <h1>Add New Shop</h1>
            <div class="crumbs"><a>Shops</a><i>/</i><span>Add New Shop</span></div>
          </div>
          ${fields.map(
            (f) => html`<div class="row">
              <label>${f.label}${f.kind === "req"
                ? html` (<span class="req">*</span>)`
                : ""}</label>
              ${f.kind === "file"
                ? html`<div class="group">
                    <input class="ctl" placeholder=${f.ph} />
                    <div class="browse">Browse</div>
                  </div>`
                : html`<input class="ctl ${f.kind === "wide" ? "wide" : ""}" placeholder=${f.ph} />`}
            </div>`
          )}
          <div class="row">
            <label>Status</label>
            <select class="ctl">
              <option>Inactivated</option>
              <option>Activated</option>
            </select>
          </div>
          <button class="submit">Submit</button>
        </section>
      </div>
      <div class="scroll">
        <div class="sb-btn"><span class="up"></span></div>
        <div class="thumb"></div>
        <div class="gap"></div>
        <div class="sb-btn"><span class="dn2"></span></div>
      </div>
    `;
  }
}
